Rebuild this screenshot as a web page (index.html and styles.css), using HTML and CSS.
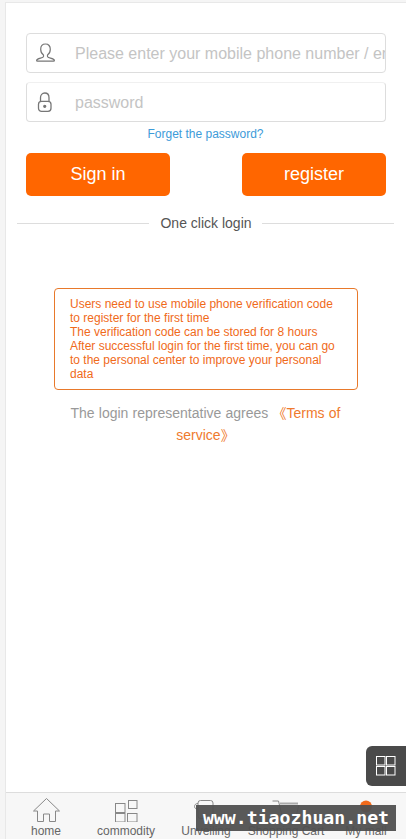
FILE: index.html
```html
<!DOCTYPE html>
<html lang="en">
<head>
    <meta charset="UTF-8">
    <meta name="viewport" content="width=device-width, initial-scale=1.0">
    <title>Sign in</title>
    <link rel="stylesheet" href="styles.css">
</head>
<body>
    <div class="page">
        <main class="content">
            <div class="field field-user">
                <svg class="field-icon" width="20" height="20" viewBox="0 0 20 20" fill="none" stroke="#777" stroke-width="1.2">
                    <path d="M9.500 1c-3 0-4.800 2.300-4.800 5.200 0 2.500 1.200 4.700 2.800 5.800v1.600c0 .7-.9 1-3 1.500-2.300.6-3.900 1.300-3.900 2.400 0 .5.300.7.9.7h16c.6 0 .9-.2.900-.7 0-1.100-1.600-1.800-3.900-2.400-2.100-.5-3-.8-3-1.500V12c1.600-1.100 2.800-3.300 2.800-5.800 0-2.900-1.800-5.200-4.800-5.200z"/>
                </svg>
                <input class="field-input" type="text" placeholder="Please enter your mobile phone number / email">
            </div>
            <div class="field field-pass">
                <svg class="field-icon" width="20" height="20" viewBox="0 0 20 20" fill="none" stroke="#777" stroke-width="1.3">
                    <path d="M4.500 9.500V5.800C4.500 3 6.300 1 8.750 1S13 3 13 5.800v3.700"/>
                    <rect x="2.500" y="9.300" width="12.500" height="10" rx="3"/>
                    <circle cx="8.750" cy="14.300" r="1" fill="#777"/>
                </svg>
                <input class="field-input" type="password" placeholder="password">
            </div>
            <a class="forget" href="#">Forget the password?</a>
            <div class="actions">
                <button class="btn">Sign in</button>
                <button class="btn">register</button>
            </div>
            <div class="divider"><span>One click login</span></div>
            <div class="notice">
                Users need to use mobile phone verification code to register for the first time<br>
                The verification code can be stored for 8 hours<br>
                After successful login for the first time, you can go to the personal center to improve your personal data
            </div>
            <p class="terms">The login representative agrees <a href="#">《Terms of service》</a></p>
        </main>

        <div class="float-menu">
            <svg width="20" height="20" viewBox="0 0 20 20" fill="none" stroke="#fff" stroke-width="1">
                <rect x=".5" y=".5" width="8.500" height="8.500"/>
                <rect x="10.500" y=".5" width="8.500" height="8.500"/>
                <rect x=".5" y="10.500" width="8.500" height="8.500"/>
                <rect x="10.500" y="10.500" width="8.500" height="8.500"/>
            </svg>
        </div>

        <nav class="tabbar">
            <a class="tab" href="#">
                <svg width="27" height="24" viewBox="0 0 27 24" fill="none" stroke="#888" stroke-width="1">
                    <path d="M.5 13 13.500.5 26.500 13H22.500v10.500h-6V16h-6v7.500h-6V13z"/>
                </svg>
                <span>home</span>
            </a>
            <a class="tab" href="#">
                <svg width="24" height="24" viewBox="0 0 24 24" fill="none" stroke="#888" stroke-width="1">
                    <rect x="1.500" y="5.500" width="9.500" height="9"/>
                    <rect x="14.500" y="2.500" width="8.500" height="8"/>
                    <rect x="1.500" y="15.500" width="9.500" height="8.500"/>
                    <rect x="13.500" y="15.500" width="9.500" height="8.500"/>
                </svg>
                <span>commodity</span>
            </a>
            <a class="tab" href="#">
                <svg width="24" height="24" viewBox="0 0 24 24" fill="none" stroke="#888" stroke-width="1">
                    <rect x="4" y="2.500" width="15" height="18" rx="2.500"/>
                    <path d="M4 5.500C1.500 5.500.5 7 .5 8.500S1.500 11 4 11"/>
                </svg>
                <span>Unveiling</span>
            </a>
            <a class="tab" href="#">
                <svg width="28" height="24" viewBox="0 0 28 24" fill="none" stroke="#888" stroke-width="1">
                    <path d="M.5 3H6.500L10 18h14l3-11"/>
                    <path d="M8 5.500h18" stroke-width="2" stroke="#aaa"/>
                </svg>
                <span>Shopping Cart</span>
            </a>
            <a class="tab" href="#">
                <svg width="24" height="24" viewBox="0 0 24 24">
                    <circle cx="12" cy="8.500" r="6" fill="#f26a1b"/>
                </svg>
                <span>My mall</span>
            </a>
        </nav>

        <div class="watermark">www.tiaozhuan.net</div>
    </div>
</body>
</html>
```

FILE: styles.css
```css
* {
    box-sizing: border-box;
}
html, body {
    margin: 0;
    padding: 0;
    height: 100%;
}
body {
    font-family: "Liberation Sans", Arial, sans-serif;
    background-color: #f5f5f5;
    overflow: hidden;
}
a {
    text-decoration: none;
}
.page {
    position: relative;
    display: flex;
    flex-direction: column;
    height: 839px;
    margin: 2px 0 0 5px;
    background: #fff;
    border-top: 1px solid #e8e8e8;
    border-left: 1px solid #e8e8e8;
}
.content {
    flex: 1;
    display: flex;
    flex-direction: column;
    padding: 30px 12px 0 11px;
}
.field {
    display: flex;
    align-items: center;
    height: 40px;
    margin: 0 8px 0 9px;
    padding-left: 9px;
    background: #fff;
    border: 1px solid #ddd;
    border-radius: 4px;
    overflow: hidden;
}
.field-pass {
    margin-top: 9px;
    border-top-color: #f0f0f0;
}
.field-icon {
    flex: none;
}
.field-input {
    flex: 1;
    min-width: 0;
    margin-left: 19px;
    padding: 2px 0 0;
    border: none;
    outline: none;
    background: transparent;
    font-family: inherit;
    font-size: 16px;
}
.field-input::placeholder {
    color: #c4c4c4;
}
.forget {
    margin-top: 5px;
    text-align: center;
    font-size: 12px;
    line-height: 14px;
    color: #3d9bd9;
}
.actions {
    display: flex;
    justify-content: space-between;
    margin: 12px 8px 0 9px;
}
.btn {
    width: 144px;
    height: 43px;
    padding: 0;
    border: none;
    border-radius: 5px;
    background-color: #ff6600;
    color: #fff;
    font-family: inherit;
    font-size: 18px;
    cursor: pointer;
}
.divider {
    display: flex;
    align-items: center;
    gap: 10px;
    margin-top: 18px;
    font-size: 14px;
    line-height: 18px;
    color: #555;
}
.divider span {
    padding-left: 1px;
}
.divider::before,
.divider::after {
    content: "";
    flex: 1;
    height: 1px;
    background: #ddd;
}
.notice {
    margin: 56px 36px 0 37px;
    padding: 8px 15px;
    border: 1px solid #e8792b;
    border-radius: 4px;
    font-size: 12px;
    line-height: 14px;
    color: #f06a1a;
}
.terms {
    margin: 12px 48px 0 48px;
    text-align: center;
    font-family: "Liberation Sans", "Noto Sans CJK SC", sans-serif;
    font-size: 14px;
    line-height: 22px;
    word-spacing: 0.3px;
    color: #999;
}
.terms a {
    color: #ef7a2d;
}
.float-menu {
    position: absolute;
    right: 0;
    top: 743px;
    display: flex;
    align-items: center;
    justify-content: center;
    width: 40px;
    height: 40px;
    background: #4a4a4a;
    border-radius: 6px 0 0 6px;
}
.tabbar {
    position: absolute;
    left: 0;
    right: 0;
    top: 789px;
    display: flex;
    height: 47px;
    padding-top: 5px;
    background: #f7f7f7;
    border-top: 1px solid #ddd;
}
.tab {
    flex: 1;
    display: flex;
    flex-direction: column;
    align-items: center;
    gap: 2px;
    font-size: 12px;
    line-height: 14px;
    color: #666;
    white-space: nowrap;
}
.watermark {
    position: absolute;
    left: 190px;
    top: 802px;
    width: 200px;
    height: 26px;
    background: rgba(80, 80, 80, 0.95);
    color: #fff;
    font-family: "DejaVu Sans Mono", monospace;
    font-size: 18.200px;
    font-weight: bold;
    line-height: 26px;
    text-align: center;
    white-space: nowrap;
}
```
